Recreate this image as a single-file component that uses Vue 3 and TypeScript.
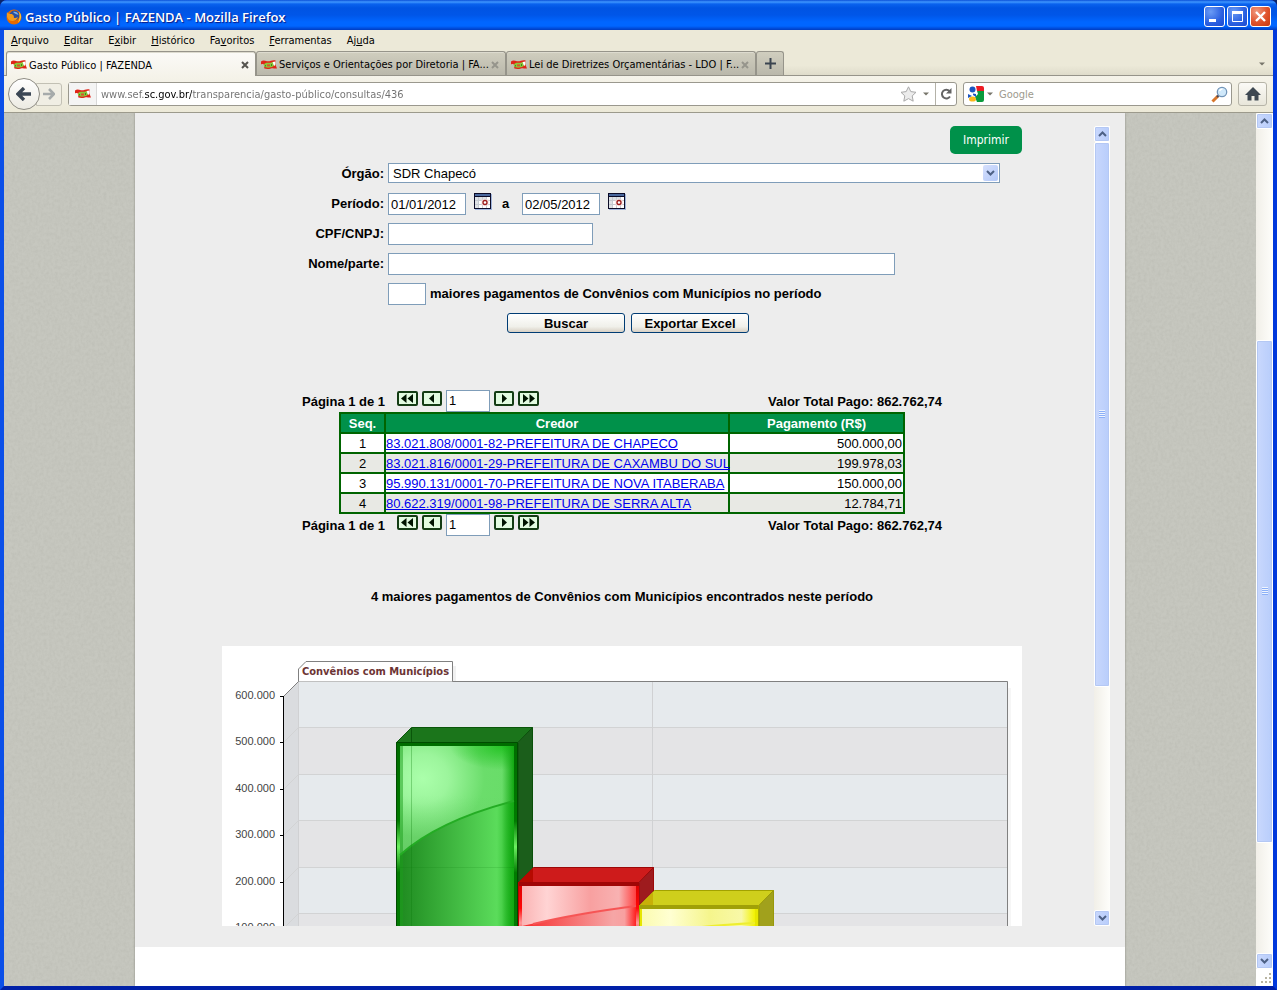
<script setup lang="ts">
import { ref } from 'vue'

interface MenuItem { before: string; key: string; after: string }
interface Tab { title: string; active: boolean }
interface Row { seq: number; credor: string; valor: string }
interface Scroll { before: number; thumb: number; after: number }

const menu: MenuItem[] = [
  { before: '', key: 'A', after: 'rquivo' },
  { before: '', key: 'E', after: 'ditar' },
  { before: 'E', key: 'x', after: 'ibir' },
  { before: '', key: 'H', after: 'istórico' },
  { before: 'Fa', key: 'v', after: 'oritos' },
  { before: '', key: 'F', after: 'erramentas' },
  { before: 'Aj', key: 'u', after: 'da' },
]

const tabs: Tab[] = [
  { title: 'Gasto Público | FAZENDA', active: true },
  { title: 'Serviços e Orientações por Diretoria | FA...', active: false },
  { title: 'Lei de Diretrizes Orçamentárias - LDO | F...', active: false },
]

const rows: Row[] = [
  { seq: 1, credor: '83.021.808/0001-82-PREFEITURA DE CHAPECO', valor: '500.000,00' },
  { seq: 2, credor: '83.021.816/0001-29-PREFEITURA DE CAXAMBU DO SUL', valor: '199.978,03' },
  { seq: 3, credor: '95.990.131/0001-70-PREFEITURA DE NOVA ITABERABA', valor: '150.000,00' },
  { seq: 4, credor: '80.622.319/0001-98-PREFEITURA DE SERRA ALTA', valor: '12.784,71' },
]

const pageScroll: Scroll = { before: 213, thumb: 499, after: 111 }
const frameScroll: Scroll = { before: 0, thumb: 542, after: 226 }

const ticks = [
  { label: '600.000', y: 50 },
  { label: '500.000', y: 96 },
  { label: '400.000', y: 143 },
  { label: '300.000', y: 189 },
  { label: '200.000', y: 236 },
  { label: '100.000', y: 282 },
]

const bands = ticks.map((t, i) => ({
  y: t.y - 15,
  h: 47,
  fill: i % 2 === 0 ? '#e6eaed' : '#e4e4e6',
}))

const address = ref('www.sef.sc.gov.br/transparencia/gasto-público/consultas/436')
const search = ref('')
const orgao = ref('SDR Chapecó')
const inicio = ref('01/01/2012')
const fim = ref('02/05/2012')
const documento = ref('')
const nome = ref('')
const quantidade = ref('')
const pagina = ref('1')
</script>

<template>
  <div class="window">
    <svg class="defs" width="0" height="0" aria-hidden="true">
      <defs>
        <symbol id="flag" viewBox="0 0 16 12">
          <path d="M0 2.5 C2 .8 4 1.8 6 2.2 C9 2.8 11 .4 14.6 1.4 L14.2 5 L16 9.4 C13 10 12 8.6 10 9.4 C7 10.6 5 10 3.4 9.6 L2.8 5.4 C2 5 1 5 0 5.6 Z" fill="#e02418" />
          <path d="M3 5.4 C5 2.8 8 4.6 10.6 3.4 C13 2.6 13.6 3.6 14 4.4 C13 6 12.6 7.6 11 8 C8 8.8 5 9 3 7.6 Z" fill="#8cc63a" />
          <path d="M11.6 3 L14.4 2.6 L14 7 L12.6 6 Z" fill="#fff" />
          <path d="M6 5.4 H9 V7.4 H6 Z" fill="#d8572a" />
          <path d="M4 6 H5 V7.4 H4 Z M10 5 H11 V7 H10 Z" fill="#3e8a1e" />
        </symbol>
        <symbol id="chev-up" viewBox="0 0 9 6">
          <path d="M1 5 L4.5 1.5 L8 5" fill="none" stroke="#4d6185" stroke-width="2" />
        </symbol>
        <symbol id="chev-down" viewBox="0 0 9 6">
          <path d="M1 1 L4.5 4.5 L8 1" fill="none" stroke="#4d6185" stroke-width="2" />
        </symbol>
        <symbol id="cal" viewBox="0 0 18 18">
          <rect x="1" y="1" width="17" height="16" fill="#9fb4dc" />
          <rect x=".5" y=".5" width="16" height="15" fill="#fff" stroke="#0c0c28" />
          <rect x="1" y="1" width="15" height="2" fill="#4a689e" />
          <path d="M1 3.500 H16" stroke="#0c0c28" />
          <path d="M1 4 H12 V7 H1 Z M1 7 H4 V15 H1 Z" fill="#dfe2e6" />
          <path d="M1 7.500 H16 M1 11.500 H16 M4.500 4 V15 M8.500 4 V15 M12.500 4 V15" stroke="#c6cbd2" />
          <rect x="7.500" y="6.500" width="7" height="6" fill="#f3dcdc" />
          <circle cx="11" cy="9.500" r="2" fill="#fff" stroke="#9c1c1c" stroke-width="1.300" />
        </symbol>
        <symbol id="first" viewBox="0 0 21 15">
          <rect x="1" y="1" width="19" height="13" rx="1" fill="#e2fbe0" stroke="#143c14" stroke-width="2" />
          <path d="M9.500 3 V12 L4 7.500 Z M16 3 V12 L10.500 7.500 Z" fill="#001400" />
        </symbol>
        <symbol id="prev" viewBox="0 0 20 15">
          <rect x="1" y="1" width="18" height="13" rx="1" fill="#e2fbe0" stroke="#143c14" stroke-width="2" />
          <path d="M12 3 V12 L7 7.500 Z" fill="#001400" />
        </symbol>
        <linearGradient id="gFace" x1="0" x2="1"><stop offset="0" stop-color="#1f8b20" /><stop offset=".85" stop-color="#5bdc5b" /><stop offset="1" stop-color="#22b522" /></linearGradient>
        <linearGradient id="gEdge" x1="0" x2="0" y1="0" y2="1"><stop offset="0" stop-color="#006c00" /><stop offset=".26" stop-color="#007a00" /><stop offset=".345" stop-color="#6cf060" /><stop offset=".43" stop-color="#007a00" /><stop offset="1" stop-color="#087808" /></linearGradient>
        <radialGradient id="gShine" cx=".2" cy=".3" r=".9"><stop offset="0" stop-color="#abffab" /><stop offset=".25" stop-color="#9cf59c" /><stop offset=".6" stop-color="#6bdd6b" /><stop offset="1" stop-color="#67dc67" /></radialGradient>
        <radialGradient id="gTop" cx=".9" cy="0" r=".6"><stop offset="0" stop-color="#1cc01c" stop-opacity=".9" /><stop offset="1" stop-color="#1cc01c" stop-opacity="0" /></radialGradient>
        <linearGradient id="gSide" x1="0" x2="1"><stop offset="0" stop-color="#12a812" stop-opacity="0" /><stop offset="1" stop-color="#12a812" /></linearGradient>
        <linearGradient id="gFoot" x1="0" x2="0" y1="0" y2="1"><stop offset="0" stop-color="#6c6" stop-opacity="0" /><stop offset="1" stop-color="#62b562" stop-opacity=".7" /></linearGradient>
        <linearGradient id="rEdge" x1="0" x2="0" y1="0" y2="1"><stop offset="0" stop-color="#d80000" /><stop offset=".16" stop-color="#ff0808" /><stop offset=".25" stop-color="#ff9a9a" /><stop offset=".34" stop-color="#ee0c0c" /></linearGradient>
        <linearGradient id="rFace" x1="0" x2="1"><stop offset="0" stop-color="#f72d2d" /><stop offset=".8" stop-color="#f6a6a6" /><stop offset=".9" stop-color="#f8a0a0" /><stop offset="1" stop-color="#ff2020" /></linearGradient>
        <linearGradient id="rShine" x1="0" x2="1"><stop offset="0" stop-color="#fab4b4" /><stop offset=".22" stop-color="#ffd4d4" /><stop offset=".6" stop-color="#f8a0a0" /><stop offset=".85" stop-color="#f8b2b2" /><stop offset="1" stop-color="#ff4040" /></linearGradient>
        <linearGradient id="yShine" x1="0" x2="1"><stop offset="0" stop-color="#fbfbb0" /><stop offset=".25" stop-color="#ffffd2" /><stop offset=".6" stop-color="#f5f58c" /><stop offset=".88" stop-color="#f8f8a8" /><stop offset="1" stop-color="#f2f200" /></linearGradient>
      </defs>
    </svg>

    <header class="titlebar">
      <svg class="fox" viewBox="0 0 16 16" aria-hidden="true">
        <circle cx="8" cy="8" r="7.500" fill="#e66a00" />
        <circle cx="8.500" cy="6.500" r="5" fill="#2b4f9e" />
        <path d="M7 3 C9 2 12 3 12.500 6 C11 5.500 9 5 7 3 Z" fill="#7fb0e8" />
        <path d="M1 3 C2 5 4 5 6 5 L8 7 C7 9 9 10 12 8 C11 12 6 13 3 11 C1 9 .4 6 1 3 Z" fill="#f59a1b" />
        <path d="M13 2.500 C16 6 15.500 11 12 13.500 C14 10 14 6 13 2.500 Z" fill="#ffd23c" />
      </svg>
      <h1 class="wtitle">Gasto Público | FAZENDA - Mozilla Firefox</h1>
      <button class="wbtn" aria-label="Minimizar"><svg viewBox="0 0 19 19"><rect x="4" y="12" width="7" height="3" fill="#fff" /></svg></button>
      <button class="wbtn" aria-label="Maximizar"><svg viewBox="0 0 19 19"><path d="M4.500 5.500 H14.500 V14.500 H4.500 Z" fill="none" stroke="#fff" /><path d="M4 5.500 H15" stroke="#fff" stroke-width="3" /></svg></button>
      <button class="wbtn close" aria-label="Fechar"><svg viewBox="0 0 19 19"><path d="M5 5 L14 14 M14 5 L5 14" stroke="#fff" stroke-width="2.400" /></svg></button>
    </header>

    <div class="body">
      <nav class="menu">
        <a v-for="m in menu" :key="m.key + m.after" href="#">{{ m.before }}<u>{{ m.key }}</u>{{ m.after }}</a>
      </nav>

      <div class="tabs">
        <div v-for="t in tabs" :key="t.title" class="tab" :class="{ active: t.active }">
          <svg class="flag" aria-hidden="true"><use href="#flag" /></svg>
          <a href="#">{{ t.title }}</a>
          <button aria-label="Fechar aba"><svg viewBox="0 0 8 8"><path d="M1 1 L7 7 M7 1 L1 7" stroke="currentColor" stroke-width="2" /></svg></button>
        </div>
        <button class="newtab" aria-label="Nova aba"><svg viewBox="0 0 11 11"><path d="M5.500 0 V11 M0 5.500 H11" stroke="#3a4450" stroke-width="2" /></svg></button>
        <svg class="alltabs" viewBox="0 0 6 4" aria-hidden="true"><path d="M0 .5 H6 L3 3.500 Z" fill="#77756a" /></svg>
      </div>

      <div class="navbar">
        <div class="history">
          <button class="back" aria-label="Voltar"><svg viewBox="0 0 16 14"><path d="M8 1 L2 7 L8 13 M2.500 7 H15" fill="none" stroke="#3b4755" stroke-width="3.400" /></svg></button>
          <button class="fwd" aria-label="Avançar"><svg viewBox="0 0 12 12"><path d="M6 1 L11 6 L6 11 M0 6 H10" fill="none" stroke="#a6abab" stroke-width="2.600" /></svg></button>
        </div>
        <div class="field url">
          <span class="ident"><svg class="flag" aria-hidden="true"><use href="#flag" /></svg></span>
          <input v-model="address" aria-label="Endereço" />
          <svg class="star" viewBox="0 0 17 16" aria-hidden="true"><path d="M8.500 .8 L10.800 5.600 L16 6.300 L12.200 9.900 L13.200 15.200 L8.500 12.600 L3.800 15.200 L4.800 9.900 L1 6.300 L6.200 5.600 Z" fill="#ececec" stroke="#a9a9a9" /></svg>
          <svg class="arrow" viewBox="0 0 6 4" aria-hidden="true"><path d="M0 .5 H6 L3 3.500 Z" fill="#77756a" /></svg>
          <button class="reload" aria-label="Recarregar"><svg viewBox="0 0 12 12"><path d="M9.500 3 A4.400 4.400 0 1 0 10 8.500" fill="none" stroke="#646464" stroke-width="2" /><path d="M11.500 0 V5.500 H6 Z" fill="#646464" /></svg></button>
        </div>
        <div class="field search">
          <svg class="google" viewBox="0 0 16 16" aria-hidden="true">
            <rect width="16" height="16" fill="#fff" />
            <path d="M8 0 H14 Q16 0 16 2 V5 H9 Z" fill="#ed1c24" />
            <path d="M9 5 H16 V14 Q16 16 14 16 H9 L7 11 L10 8 Z" fill="#0a9a3c" />
            <circle cx="4.500" cy="3.500" r="3" fill="#1a55c0" />
            <path d="M0 8 L4 10 L0 12 Z" fill="#1a55c0" />
            <ellipse cx="4.500" cy="13" rx="3.500" ry="2.600" fill="#fbb81c" />
            <path d="M5 7.500 L8 8 L8 11 L5 9 Z" fill="#1a55c0" />
          </svg>
          <svg class="arrow" viewBox="0 0 6 4" aria-hidden="true"><path d="M0 .5 H6 L3 3.500 Z" fill="#77756a" /></svg>
          <input v-model="search" placeholder="Google" aria-label="Pesquisar" />
          <button class="glass" aria-label="Buscar na web"><svg viewBox="0 0 17 17"><path d="M7 10 L1.500 15.500" stroke="#d8772c" stroke-width="3" /><path d="M8 9 L6 11" stroke="#445" stroke-width="2" /><circle cx="11" cy="6" r="4.700" fill="#cfe8fa" stroke="#7295b8" stroke-width="1.300" /><path d="M8.500 5 A3 3 0 0 1 11.500 3" fill="none" stroke="#fff" stroke-width="1.500" /></svg></button>
        </div>
        <button class="home" aria-label="Página inicial"><svg viewBox="0 0 16 14"><path d="M8 0 L16 8 H13.500 V13.500 H9.500 V9 H6.500 V13.500 H2.500 V8 H0 Z" fill="#3e4852" /></svg></button>
      </div>

      <div class="viewport">
        <div class="canvas">
          <svg class="texture" aria-hidden="true">
            <filter id="grain" x="0" y="0" width="100%" height="100%">
              <feTurbulence type="fractalNoise" baseFrequency=".35 .3" numOctaves="3" seed="4" />
              <feColorMatrix values="0 0 0 0 .3  0 0 0 0 .3  0 0 0 0 .26  .2 .15 0 0 -.13" />
            </filter>
            <rect width="100%" height="100%" filter="url(#grain)" />
          </svg>
          <main class="page">
            <div class="panel">
              <div class="frame">
                <div class="content">
                  <div class="sheet">
                    <div class="actions"><button class="print">Imprimir</button></div>

                    <form class="form" @submit.prevent>
                      <label for="orgao">Órgão:</label>
                      <div class="cell">
                        <div class="selectbox">
                          <select id="orgao" v-model="orgao"><option>SDR Chapecó</option></select>
                          <span class="drop"><svg aria-hidden="true"><use href="#chev-down" /></svg></span>
                        </div>
                      </div>
                      <label for="inicio">Período:</label>
                      <div class="cell">
                        <input id="inicio" v-model="inicio" class="date" />
                        <button type="button" class="cal" aria-label="Calendário inicial"><svg><use href="#cal" /></svg></button>
                        <label for="fim" class="until">a</label>
                        <input id="fim" v-model="fim" class="date" />
                        <button type="button" class="cal" aria-label="Calendário final"><svg><use href="#cal" /></svg></button>
                      </div>
                      <label for="doc">CPF/CNPJ:</label>
                      <div class="cell"><input id="doc" v-model="documento" class="doc" /></div>
                      <label for="nome">Nome/parte:</label>
                      <div class="cell"><input id="nome" v-model="nome" class="nome" /></div>
                      <div class="cell wide">
                        <input id="qtd" v-model="quantidade" class="qtd" />
                        <label for="qtd">maiores pagamentos de Convênios com Municípios no período</label>
                      </div>
                      <div class="submit">
                        <button>Buscar</button>
                        <button type="button">Exportar Excel</button>
                      </div>
                    </form>

                    <section class="results">
                      <div class="pager">
                        <span>Página 1 de 1</span>
                        <button class="w21" aria-label="Primeira página"><svg><use href="#first" /></svg></button>
                        <button aria-label="Página anterior"><svg><use href="#prev" /></svg></button>
                        <input v-model="pagina" aria-label="Página" />
                        <button class="flip" aria-label="Próxima página"><svg><use href="#prev" /></svg></button>
                        <button class="w21 flip" aria-label="Última página"><svg><use href="#first" /></svg></button>
                        <span class="total">Valor Total Pago: 862.762,74</span>
                      </div>
                      <table>
                        <colgroup><col class="c1" /><col class="c2" /><col class="c3" /></colgroup>
                        <thead><tr><th>Seq.</th><th>Credor</th><th>Pagamento (R$)</th></tr></thead>
                        <tbody>
                          <tr v-for="r in rows" :key="r.seq">
                            <td class="seq">{{ r.seq }}</td>
                            <td><a href="#">{{ r.credor }}</a></td>
                            <td class="num">{{ r.valor }}</td>
                          </tr>
                        </tbody>
                      </table>
                      <div class="pager">
                        <span>Página 1 de 1</span>
                        <button class="w21" aria-label="Primeira página"><svg><use href="#first" /></svg></button>
                        <button aria-label="Página anterior"><svg><use href="#prev" /></svg></button>
                        <input v-model="pagina" aria-label="Página" />
                        <button class="flip" aria-label="Próxima página"><svg><use href="#prev" /></svg></button>
                        <button class="w21 flip" aria-label="Última página"><svg><use href="#first" /></svg></button>
                        <span class="total">Valor Total Pago: 862.762,74</span>
                      </div>
                    </section>

                    <p class="summary">4 maiores pagamentos de Convênios com Municípios encontrados neste período</p>

                    <svg class="chart" viewBox="0 0 800 400" role="img" aria-label="Convênios com Municípios">
                      <rect width="800" height="400" fill="#fff" />
                      <rect x="786" y="42" width="3" height="358" fill="#f6f6f6" />
                      <rect x="231" y="20" width="3" height="15" fill="#f1f1f1" />
                      <rect v-for="b in bands" :key="b.y" x="76" :y="b.y" width="710" :height="b.h" :fill="b.fill" />
                      <path d="M61.500 50.500 L76.500 35.500 V400 H61.500 Z" fill="#dadcdf" />
                      <path d="M61.500 50.500 L76.500 35.500" stroke="#808080" />
                      <path v-for="t in ticks.slice(1)" :key="t.y" :d="`M61.5 ${t.y + .5} L76.5 ${t.y - 14.5} H785`" fill="none" stroke="#d2d3d4" />
                      <path d="M76.500 36 V400 M430.500 36 V400" stroke="#d0d1d3" />
                      <path d="M76 35.500 H785.500 V400" fill="none" stroke="#808080" />
                      <path d="M76.500 35.500 V23 L84 15.500 H230.500 V35.500" fill="#fff" stroke="#808080" />
                      <text x="80" y="29" class="ctitle">Convênios com Municípios</text>
                      <path d="M61.500 50 V400" stroke="#000" />
                      <g v-for="t in ticks" :key="t.label">
                        <path :d="`M58 ${t.y + .5} H62`" stroke="#000" />
                        <text x="53" :y="t.y + 3" text-anchor="end" class="tick">{{ t.label }}</text>
                      </g>

                      <path d="M174.500 96.500 L189.500 81.500 H310.500 L296 96.500 Z" fill="#1b751b" stroke="#0a560a" />
                      <path d="M296 96.500 L310.500 81.500 V400 H296 Z" fill="#1b5e1b" stroke="#0a500a" />
                      <path d="M189.500 82 V97" stroke="#0a560a" />
                      <rect x="174" y="96" width="122" height="304" fill="url(#gEdge)" />
                      <path d="M174.500 400 V96.500 H295.500 V400" fill="none" stroke="#004c00" />
                      <rect x="178" y="100" width="114" height="300" fill="url(#gFace)" />
                      <path d="M178 100 H292 V155 C250 166 208 182 178 209 Z" fill="url(#gShine)" />
                      <path d="M178 150 H292 V155 C250 166 208 182 178 209 Z" fill="url(#gFoot)" opacity=".7" />
                      <rect x="178" y="100" width="3" height="300" fill="#1c9e1c" opacity=".5" />
                      <rect x="200" y="100" width="92" height="40" fill="url(#gTop)" />
                      <rect x="280" y="100" width="12" height="300" fill="url(#gSide)" />
                      <path d="M178 209 C208 182 250 166 292 155" fill="none" stroke="#24ac24" stroke-width="2" />
                      <path d="M189.500 100 V400" stroke="#0a7a0a" opacity=".3" />
                      <path d="M178 221.500 H292" stroke="#0a7a0a" opacity=".15" />

                      <path d="M296.500 236.500 L311.500 221.500 H431.500 L417 236.500 Z" fill="#ce1b1b" stroke="#9c0808" />
                      <path d="M297 236 L311 222 V236 Z" fill="#b60a00" />
                      <path d="M417 236.500 L431.500 221.500 V400 H417 Z" fill="#9e1b1e" stroke="#9c0808" />
                      <rect x="296" y="236" width="121" height="164" fill="url(#rEdge)" />
                      <rect x="296" y="236" width="121" height="4" fill="#a00606" />
                      <path d="M296.500 236 V400" stroke="#b00" />
                      <rect x="300" y="240" width="114" height="160" fill="url(#rFace)" />
                      <path d="M300 240 H414 V260 C375 265 340 271 300 280 Z" fill="url(#rShine)" />
                      <path d="M311 278 C340 271 375 265 414 260" fill="none" stroke="#f65555" stroke-width="2" />

                      <path d="M417.500 259.500 L432.500 244.500 H551.500 L537 259.500 Z" fill="#cfcf1c" stroke="#a2a200" />
                      <path d="M418 259 L431 246 V259 Z" fill="#c8b008" />
                      <path d="M537 259.500 L551.500 244.500 V400 H537 Z" fill="#a1a11c" stroke="#98980a" />
                      <rect x="417" y="259" width="120" height="141" fill="#e6e600" />
                      <rect x="417" y="259" width="120" height="4" fill="#a0a008" />
                      <path d="M417.500 259 V400 M536.500 259 V400" stroke="#a8a800" />
                      <rect x="420" y="263" width="113" height="137" fill="url(#yShine)" />
                      <path d="M480 281 C500 279 515 278 533 277" fill="none" stroke="#eeee30" stroke-width="2" />
                    </svg>
                  </div>
                </div>
                <div class="scroll">
                  <button aria-label="Subir"><svg><use href="#chev-up" /></svg></button>
                  <div class="track">
                    <div :style="{ flexGrow: frameScroll.before }"></div>
                    <div class="thumb" :style="{ flexGrow: frameScroll.thumb }"><i></i></div>
                    <div :style="{ flexGrow: frameScroll.after }"></div>
                  </div>
                  <button aria-label="Descer"><svg><use href="#chev-down" /></svg></button>
                </div>
              </div>
            </div>
            <div class="foot"></div>
          </main>
        </div>
        <div class="side">
          <div class="scroll">
            <button aria-label="Subir página"><svg><use href="#chev-up" /></svg></button>
            <div class="track">
              <div :style="{ flexGrow: pageScroll.before }"></div>
              <div class="thumb" :style="{ flexGrow: pageScroll.thumb }"><i></i></div>
              <div :style="{ flexGrow: pageScroll.after }"></div>
            </div>
            <button aria-label="Descer página"><svg><use href="#chev-down" /></svg></button>
          </div>
          <svg class="grip" viewBox="0 0 17 17" aria-hidden="true">
            <path d="M13 4 h2 v2 h-2 Z M13 8 h2 v2 h-2 Z M9 8 h2 v2 h-2 Z M13 12 h2 v2 h-2 Z M9 12 h2 v2 h-2 Z M5 12 h2 v2 h-2 Z" fill="#b8b4a2" />
          </svg>
        </div>
      </div>
    </div>
  </div>
</template>

<style>
body {
  margin: 0;
  background: #0a246a;
}
</style>

<style scoped>
* {
  box-sizing: border-box;
}
.window {
  height: 100vh;
  display: flex;
  flex-direction: column;
  font-family: "DejaVu Sans Condensed", "DejaVu Sans", sans-serif;
  font-size: 11px;
  color: #000;
  background: #0831d9;
  border-radius: 7px 7px 0 0;
  overflow: hidden;
}
.defs {
  position: absolute;
}
button {
  padding: 0;
  border: 0;
  background: none;
  font: inherit;
  color: inherit;
  display: flex;
  align-items: center;
  justify-content: center;
}
input {
  font: inherit;
  min-width: 0;
}

.titlebar {
  height: 30px;
  flex: none;
  display: flex;
  align-items: center;
  gap: 2px;
  padding: 3px 6px 0;
  background: linear-gradient(#0a50d8 0, #3f97ff 2px, #0a62ee 4px, #0054e3 8px, #0056e8 15px, #0066ff 22px, #0066ff 26px, #0050e0 28px, #003cc0 30px);
}
.fox {
  width: 16px;
  height: 16px;
}
.wtitle {
  flex: 1;
  margin: 0;
  padding-left: 1px;
  font: 600 13px/20px "Open Sans", sans-serif;
  color: #fff;
  text-shadow: 1px 1px 1px #0a1883;
}
.wbtn {
  width: 21px;
  height: 21px;
  border: 1px solid #fff;
  border-radius: 3px;
  background: radial-gradient(circle at 30% 25%, #6a9bf5, #2a5fe0 60%, #1c4ad0);
}
.wbtn.close {
  background: radial-gradient(circle at 30% 25%, #f09a80, #e0532c 55%, #c8380e);
}
.wbtn svg {
  width: 19px;
  height: 19px;
}

.body {
  flex: 1;
  min-height: 0;
  display: flex;
  flex-direction: column;
  border-style: solid;
  border-width: 0 4px 4px;
  border-color: #0046ee #0038dc #0020a8 #0b4fe8;
  background: #ece9d8;
}
.menu {
  height: 21px;
  display: flex;
  align-items: center;
  gap: 15px;
  padding-left: 7px;
}
.menu a {
  color: #000;
  text-decoration: none;
}

.tabs {
  height: 25px;
  flex: none;
  display: flex;
  padding-left: 2px;
  border-bottom: 1px solid #96948a;
  background: linear-gradient(#ece9d8 60%, #dfdccb);
}
.tab {
  width: 250px;
  height: 24px;
  display: flex;
  align-items: center;
  gap: 2px;
  padding: 2px 6px 0 4px;
  border: 1px solid #96948a;
  border-bottom: 0;
  border-radius: 3px 3px 0 0;
  background: linear-gradient(#d0cebf, #bab8ab);
  box-shadow: inset 0 1px #dddbcf;
}
.tab.active {
  height: 25px;
  background: linear-gradient(#fbfaf7, #f5f3ea);
}
.tab a {
  flex: 1;
  color: #000;
  text-decoration: none;
  white-space: nowrap;
}
.tab button {
  color: #96958c;
}
.tab.active button {
  color: #55544e;
}
.tab button svg {
  width: 8px;
  height: 8px;
}
.flag {
  width: 16px;
  height: 12px;
  flex: none;
}
.newtab {
  width: 28px;
  height: 24px;
  border: 1px solid #96948a;
  border-bottom: 0;
  border-radius: 3px 3px 0 0;
  background: linear-gradient(#d0cebf, #bab8ab);
}
.newtab svg {
  width: 11px;
  height: 11px;
}
.alltabs {
  width: 6px;
  height: 4px;
  margin: 11px 8px 0 auto;
}

.navbar {
  height: 37px;
  flex: none;
  display: flex;
  align-items: center;
  gap: 6px;
  padding: 0 6px 0 4px;
  border-bottom: 1px solid #9c9a8c;
  background: linear-gradient(#f5f3ea, #ece9d8);
}
.history {
  width: 54px;
  display: flex;
  align-items: center;
}
.back {
  width: 32px;
  height: 32px;
  border: 1px solid #8e8c84;
  border-radius: 50%;
  background: linear-gradient(#fff, #eceae2);
  z-index: 1;
}
.back svg {
  width: 16px;
  height: 14px;
}
.fwd {
  width: 26px;
  height: 23px;
  margin-left: -4px;
  border: 1px solid #c2c0b4;
  border-radius: 0 3px 3px 0;
  background: #f0eee4;
}
.fwd svg {
  width: 12px;
  height: 12px;
}
.field {
  height: 24px;
  display: flex;
  align-items: center;
  border: 1px solid #9a988e;
  border-radius: 3px;
  background: #fff;
}
.field input {
  flex: 1;
  border: 0;
  padding: 0;
  outline: 0;
  background: none;
}
.url {
  flex: 1;
}
.ident {
  align-self: stretch;
  width: 28px;
  display: flex;
  align-items: center;
  justify-content: center;
  margin-right: 4px;
  border-right: 1px solid #d8d8d8;
  background: #f4f4f4;
}
.url .ident + input {
  color: transparent;
  background: linear-gradient(90deg, #707070 44px, #000 44px, #000 91px, #707070 91px);
  -webkit-background-clip: text;
  background-clip: text;
}
.star {
  width: 17px;
  height: 16px;
}
.arrow {
  width: 6px;
  height: 4px;
  margin: 0 6px;
}
.reload {
  align-self: stretch;
  width: 21px;
  border-left: 1px solid #b4b2a8;
}
.reload svg {
  width: 12px;
  height: 12px;
}
.search {
  width: 269px;
  padding: 0 3px 0 4px;
}
.google {
  width: 16px;
  height: 16px;
  flex: none;
}
.search .arrow {
  margin: 0 6px 0 3px;
}
.search input::placeholder {
  color: #9d9a8e;
  opacity: 1;
}
.glass svg {
  width: 17px;
  height: 17px;
}
.home {
  width: 29px;
  height: 24px;
  border: 1px solid #b6b4a8;
  border-radius: 3px;
  background: linear-gradient(#fbfaf6, #e8e6da);
}
.home svg {
  width: 16px;
  height: 14px;
}

.viewport {
  flex: 1;
  min-height: 0;
  display: flex;
}
.canvas {
  position: relative;
  flex: 1;
  min-width: 0;
  display: flex;
  justify-content: center;
  background: #c6c7bf;
  overflow: hidden;
}
.texture {
  position: absolute;
  inset: 0;
  width: 100%;
  height: 100%;
}
.page {
  position: relative;
  width: 990px;
  max-width: 100%;
  display: flex;
  flex-direction: column;
  background: #fff;
  box-shadow: 0 0 2px #85867e;
}
.panel {
  flex: 1;
  min-height: 0;
  display: flex;
  padding: 13px 15px 21px;
  background: #ededed;
}
.foot {
  height: 39px;
  flex: none;
}
.frame {
  flex: 1;
  min-width: 0;
  display: flex;
}
.content {
  flex: 1;
  min-width: 0;
  overflow: hidden;
  font: 13px/20px "Liberation Sans", Arial, sans-serif;
}
.sheet {
  max-width: 800px;
  margin: 0 auto;
}
.actions {
  display: flex;
  justify-content: flex-end;
}
.print {
  width: 72px;
  height: 28px;
  border-radius: 5px;
  background: #00914a;
  color: #fff;
  font: 12px/28px "DejaVu Sans Condensed", sans-serif;
}

.form {
  display: grid;
  grid-template-columns: 162px 1fr;
  grid-auto-rows: 22px;
  gap: 8px 4px;
  margin-top: 9px;
  font-weight: bold;
}
.form > label {
  text-align: right;
  line-height: 22px;
}
.form input,
.pager input {
  height: 22px;
  border: 1px solid #7f9db9;
  background: #fff;
  padding: 1px 2px;
  font-weight: normal;
}
.cell {
  display: flex;
  align-items: flex-start;
}
.cell label {
  line-height: 22px;
  margin-left: 4px;
}
.wide {
  grid-column: 2;
}
.selectbox {
  width: 612px;
  height: 20px;
  display: flex;
  padding: 1px;
  border: 1px solid #7f9db9;
  background: #fff;
}
.selectbox select {
  flex: 1;
  appearance: none;
  border: 0;
  padding: 1px 3px 0;
  background: none;
  font: 13px/16px "Liberation Sans", Arial, sans-serif;
  color: #000;
}
.drop {
  width: 15px;
  display: flex;
  align-items: center;
  justify-content: center;
  border-radius: 2px;
  background: linear-gradient(135deg, #d6e0fd, #b2c8f8);
}
.drop svg,
.scroll svg {
  width: 9px;
  height: 6px;
}
.date {
  width: 78px;
}
.cal {
  margin-left: 8px;
}
.cal svg {
  width: 18px;
  height: 18px;
}
.cell .until {
  width: 8px;
  margin: 0 12px 0 10px;
}
.doc {
  width: 205px;
}
.nome {
  width: 507px;
}
.qtd {
  width: 38px;
}
.submit {
  grid-column: 1 / 3;
  display: flex;
  justify-content: center;
  align-items: flex-start;
  gap: 6px;
  padding-left: 12px;
}
.submit button {
  width: 118px;
  height: 20px;
  padding-top: 2px;
  border: 1px solid #003c74;
  border-radius: 3px;
  background: linear-gradient(#fff, #f0f0ea 70%, #d8d0c4);
  font-weight: bold;
}

.results {
  margin-top: 55px;
}
.pager {
  display: flex;
  align-items: flex-start;
  gap: 4px;
  width: 640px;
  margin-left: 80px;
  height: 22px;
  font-weight: bold;
  line-height: 24px;
}
.pager span:first-child {
  width: 91px;
}
.pager button {
  margin-top: 1px;
}
.pager button svg {
  width: 20px;
  height: 15px;
}
.pager .w21 svg {
  width: 21px;
}
.pager .flip svg {
  transform: scaleX(-1);
}
.pager input {
  width: 44px;
}
.pager .total {
  margin-left: auto;
}
table {
  width: 566px;
  margin: 0 auto;
  border-collapse: collapse;
  table-layout: fixed;
}
.c1 {
  width: 45px;
}
.c3 {
  width: 175px;
}
th,
td {
  height: 20px;
  padding: 2px 0 0;
  border: 2px solid #006400;
  line-height: 16px;
  white-space: nowrap;
}
th {
  background: #00914a;
  color: #fff;
}
td {
  background: #fff;
}
tr:nth-child(even) td {
  background: #e8e9e4;
}
td a {
  color: #0000ee;
}
.seq {
  text-align: center;
}
.num {
  padding-right: 1px;
  text-align: right;
}
.summary {
  margin: 51px 0 39px;
  text-align: center;
  font-weight: bold;
}
.chart {
  display: block;
  width: 100%;
}
.ctitle {
  font: bold 11px "DejaVu Sans Condensed", sans-serif;
  fill: #6c3434;
}
.tick {
  font: 11px "Liberation Sans", sans-serif;
  fill: #444;
}

.side {
  width: 17px;
  display: flex;
  flex-direction: column;
  background: #fff;
}
.side .scroll {
  flex: 1;
}
.scroll {
  width: 16px;
  display: flex;
  flex-direction: column;
  background: linear-gradient(90deg, #f1efe8, #fefefb);
}
.side .scroll {
  width: 17px;
}
.scroll button,
.thumb {
  border: 1px solid #fff;
  border-radius: 2px;
  background: linear-gradient(90deg, #c9d8fd, #b8cdfb);
  box-shadow: inset 0 0 0 1px #b4c8f4, inset 0 -1px #8aa8e4;
}
.scroll button {
  height: 16px;
}
.track {
  flex: 1;
  display: flex;
  flex-direction: column;
}
.thumb {
  display: flex;
  align-items: center;
  justify-content: center;
}
.thumb i {
  width: 6px;
  height: 8px;
  background: repeating-linear-gradient(#eef4fe 0 1px, #8cb0f8 1px 2px);
}
.grip {
  width: 17px;
  height: 17px;
}
</style>
